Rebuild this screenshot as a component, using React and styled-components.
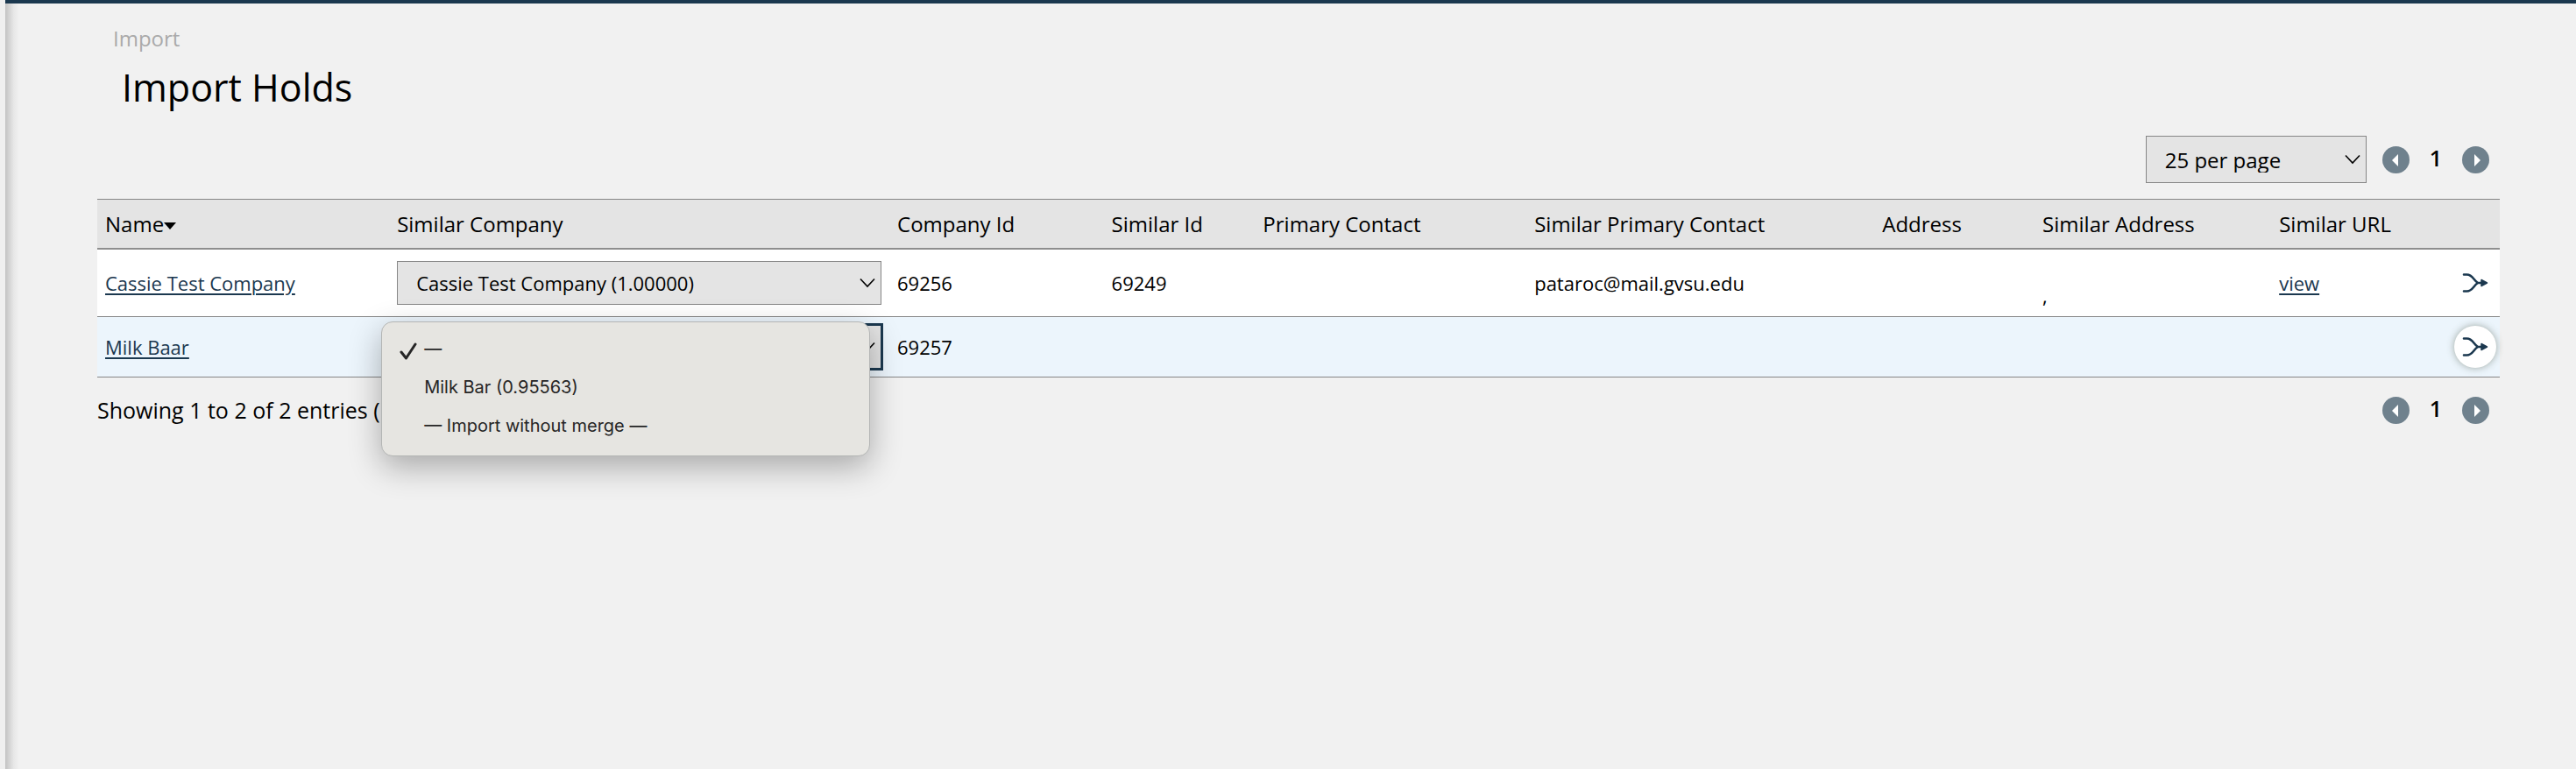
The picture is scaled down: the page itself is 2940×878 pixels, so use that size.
import React from "react";
import styled, { createGlobalStyle, css } from "styled-components";

const navy = "#1b384f";
const line = "#868686";
const panel = "#e4e4e4";

const GlobalStyle = createGlobalStyle`
  * { box-sizing: border-box; }
  body {
    margin: 0;
    background: #f1f1f1;
    color: #000;
    font-family: "Open Sans", "Noto Sans", sans-serif;
    font-size: 22px;
    line-height: 29px;
  }
  button, select { font: inherit; color: inherit; margin: 0; }
`;

const Shell = styled.div`
  display: flex;
  min-height: 100vh;
`;

const Gutter = styled.div`
  flex: 0 0 6px;
  background: #efefef;
`;

const Page = styled.main`
  flex: 1;
  min-width: 0;
  border-top: 4px solid ${navy};
  padding: 25px 87px 40px 105px;
  background: linear-gradient(to right, #c2c2c2 0, #d2d2d2 4px, #e8e8e8 10px, #f1f1f1 16px);
`;

const Breadcrumb = styled.nav`
  padding-left: 18px;
  font-size: 24px;
  line-height: 30px;
  a { color: #aaa; text-decoration: none; }
`;

const Title = styled.h1`
  margin: 9px 0 24px;
  padding-left: 28px;
  font-size: 43px;
  font-weight: 400;
  line-height: 63px;
`;

const Bar = styled.div`
  display: flex;
  align-items: center;
  justify-content: ${(p) => (p.$spread ? "space-between" : "flex-end")};
  gap: 18px;
  min-height: 54px;
  margin: ${(p) => (p.$spread ? "10px 0 0" : "0 0 18px")};
  font-size: 25px;
`;

const PagerList = styled.nav`
  display: flex;
  align-items: center;
  gap: 23px;
  padding-right: 12px;
`;

const RoundButton = styled.button`
  display: grid;
  place-items: center;
  width: 31px;
  height: 31px;
  padding: 0;
  border: 0;
  border-radius: 50%;
  background: #6f818d;
`;

const CurrentPage = styled.span`
  padding-bottom: 4px;
  font-size: 25px;
  font-weight: 600;
`;

const SelectWrap = styled.div`
  position: relative;
  width: ${(p) => (p.$compact ? "252px" : "100%")};
`;

const Select = styled.select`
  display: block;
  width: 100%;
  height: ${(p) => (p.$compact ? "54px" : "50px")};
  padding: 0 44px 0 21px;
  border: 1px solid ${line};
  border-radius: 0;
  appearance: none;
  background: ${panel};
  font-size: ${(p) => (p.$compact ? "24px" : "22px")};
  ${(p) =>
    p.$focused &&
    css`
      outline: 3px solid ${navy};
      outline-offset: -1px;
    `}
`;

const Chevron = styled.svg`
  position: absolute;
  right: 7px;
  top: 50%;
  margin-top: -6px;
  pointer-events: none;
`;

const Table = styled.table`
  width: 100%;
  table-layout: fixed;
  border-collapse: separate;
  border-spacing: 0;
`;

const Col = styled.col`
  width: ${(p) => p.$width};
`;

const HeadCell = styled.th`
  height: 58px;
  padding: 0 9px;
  border-top: 1px solid ${line};
  border-bottom: 2px solid #8e8e8e;
  background: ${panel};
  font-size: 24px;
  font-weight: 400;
  text-align: left;
  white-space: nowrap;
`;

const SortArrow = styled.svg`
  vertical-align: 3px;
`;

const Row = styled.tr`
  background: ${(p) => (p.$active ? "#ecf5fc" : "#fff")};
`;

const Cell = styled.td`
  padding: ${(p) => (p.$action ? "0 4px" : "9px")};
  border-bottom: 1px solid ${line};
  text-align: ${(p) => (p.$action ? "right" : "left")};
  vertical-align: middle;
`;

const Link = styled.a`
  color: ${navy};
  text-decoration: underline;
  text-decoration-thickness: 2px;
  text-underline-offset: 3px;
`;

const MergeButton = styled.button`
  display: inline-grid;
  place-items: center;
  width: 48px;
  height: 48px;
  padding: 0;
  border: 0;
  border-radius: 50%;
  vertical-align: middle;
  background: ${(p) => (p.$active ? "#fff" : "transparent")};
  box-shadow: ${(p) => (p.$active ? "0 0 8px rgba(60, 70, 50, 0.45)" : "none")};
`;

const Menu = styled.ul`
  position: absolute;
  z-index: 2;
  left: -18px;
  top: -4px;
  width: 558px;
  margin: 0;
  padding: 8px 10px 12px;
  list-style: none;
  border: 1px solid #b4b6b5;
  border-radius: 13px;
  background: #e6e5e1;
  box-shadow: 0 12px 36px rgba(0, 0, 0, 0.3);
  color: #262626;
  font-family: Inter, "Liberation Sans", sans-serif;
  font-size: 20px;
`;

const MenuItem = styled.li`
  display: flex;
  align-items: center;
  height: 44px;
`;

const Tick = styled.span`
  flex: 0 0 38px;
  padding: 6px 0 0 10px;
  line-height: 0;
`;

const columns = [
  ["Name", "12.15%"],
  ["Similar Company", "20.82%"],
  ["Company Id", "8.92%"],
  ["Similar Id", "6.30%"],
  ["Primary Contact", "11.30%"],
  ["Similar Primary Contact", "14.48%"],
  ["Address", "6.67%"],
  ["Similar Address", "9.85%"],
  ["Similar URL", "6.5%"],
];

const options = ["—", "Milk Bar (0.95563)", "— Import without merge —"];

function Dropdown({ label, compact, focused, choices, children }) {
  return (
    <SelectWrap $compact={compact}>
      <Select aria-label={label} $compact={compact} $focused={focused}>
        {choices.map((c) => (
          <option key={c}>{c}</option>
        ))}
      </Select>
      <Chevron width="18" height="12" viewBox="0 0 18 12" fill="none" stroke="#000" strokeWidth="1.600">
        <path d="M1 1.5 9 10l8-8.500" />
      </Chevron>
      {children}
    </SelectWrap>
  );
}

function Pager({ label }) {
  return (
    <PagerList aria-label={label}>
      <RoundButton aria-label="Previous page">
        <svg width="31" height="31" viewBox="0 0 31 31" fill="#fff">
          <path d="M18 9v14l-7-7z" />
        </svg>
      </RoundButton>
      <CurrentPage>1</CurrentPage>
      <RoundButton aria-label="Next page">
        <svg width="31" height="31" viewBox="0 0 31 31" fill="#fff">
          <path d="M14 9v14l7-7z" />
        </svg>
      </RoundButton>
    </PagerList>
  );
}

function Merge({ active, label }) {
  return (
    <MergeButton aria-label={label} $active={active}>
      <svg width="30" height="22" viewBox="0 0 30 22" fill="none" stroke={navy} strokeWidth="2.600" strokeLinecap="round">
        <path d="M2 1.500h3.500C12 1.500 13 8 18 11c-5 3-6 9.500-12.500 9.500H2M18 11h5" />
        <path d="M22 7.500v7l6.500-3.500z" fill={navy} strokeWidth="1.500" strokeLinejoin="round" />
      </svg>
    </MergeButton>
  );
}

export default function App() {
  return (
    <Shell>
      <GlobalStyle />
      <Gutter />
      <Page>
        <Breadcrumb aria-label="Breadcrumb">
          <a href="#import">Import</a>
        </Breadcrumb>
        <Title>Import Holds</Title>
        <Bar>
          <Dropdown label="Entries per page" compact choices={["25 per page"]} />
          <Pager label="Pages, top" />
        </Bar>
        <Table>
          <colgroup>
            {columns.map(([name, width]) => (
              <Col key={name} $width={width} />
            ))}
            <col />
          </colgroup>
          <thead>
            <tr>
              {columns.map(([name], i) => (
                <HeadCell key={name} scope="col">
                  {name}
                  {i === 0 && (
                    <SortArrow width="14" height="8" viewBox="0 0 14 8">
                      <path d="M0 0h14L7 8z" />
                    </SortArrow>
                  )}
                </HeadCell>
              ))}
              <HeadCell aria-label="Actions" />
            </tr>
          </thead>
          <tbody>
            <Row>
              <Cell><Link href="#69256">Cassie Test Company</Link></Cell>
              <Cell>
                <Dropdown label="Similar company for Cassie Test Company" choices={["Cassie Test Company (1.00000)"]} />
              </Cell>
              <Cell>69256</Cell>
              <Cell>69249</Cell>
              <Cell />
              <Cell>pataroc@mail.gvsu.edu</Cell>
              <Cell />
              <Cell><br />,</Cell>
              <Cell><Link href="#view">view</Link></Cell>
              <Cell $action><Merge label="Merge Cassie Test Company" /></Cell>
            </Row>
            <Row $active>
              <Cell><Link href="#69257">Milk Baar</Link></Cell>
              <Cell>
                <Dropdown label="Similar company for Milk Baar" focused choices={options}>
                  <Menu role="listbox" aria-label="Similar company options">
                    {options.map((o, i) => (
                      <MenuItem key={o} role="option" aria-selected={i === 0}>
                        <Tick>
                          {i === 0 && (
                            <svg width="20" height="20" viewBox="0 0 20 20" fill="none" stroke="#262626" strokeWidth="3" strokeLinecap="round" strokeLinejoin="round">
                              <path d="M2 11l5.500 7L18 2" />
                            </svg>
                          )}
                        </Tick>
                        {o}
                      </MenuItem>
                    ))}
                  </Menu>
                </Dropdown>
              </Cell>
              <Cell>69257</Cell>
              <Cell />
              <Cell />
              <Cell />
              <Cell />
              <Cell />
              <Cell />
              <Cell $action><Merge active label="Merge Milk Baar" /></Cell>
            </Row>
          </tbody>
        </Table>
        <Bar $spread>
          <span>Showing 1 to 2 of 2 entries (</span>
          <Pager label="Pages, bottom" />
        </Bar>
      </Page>
    </Shell>
  );
}
